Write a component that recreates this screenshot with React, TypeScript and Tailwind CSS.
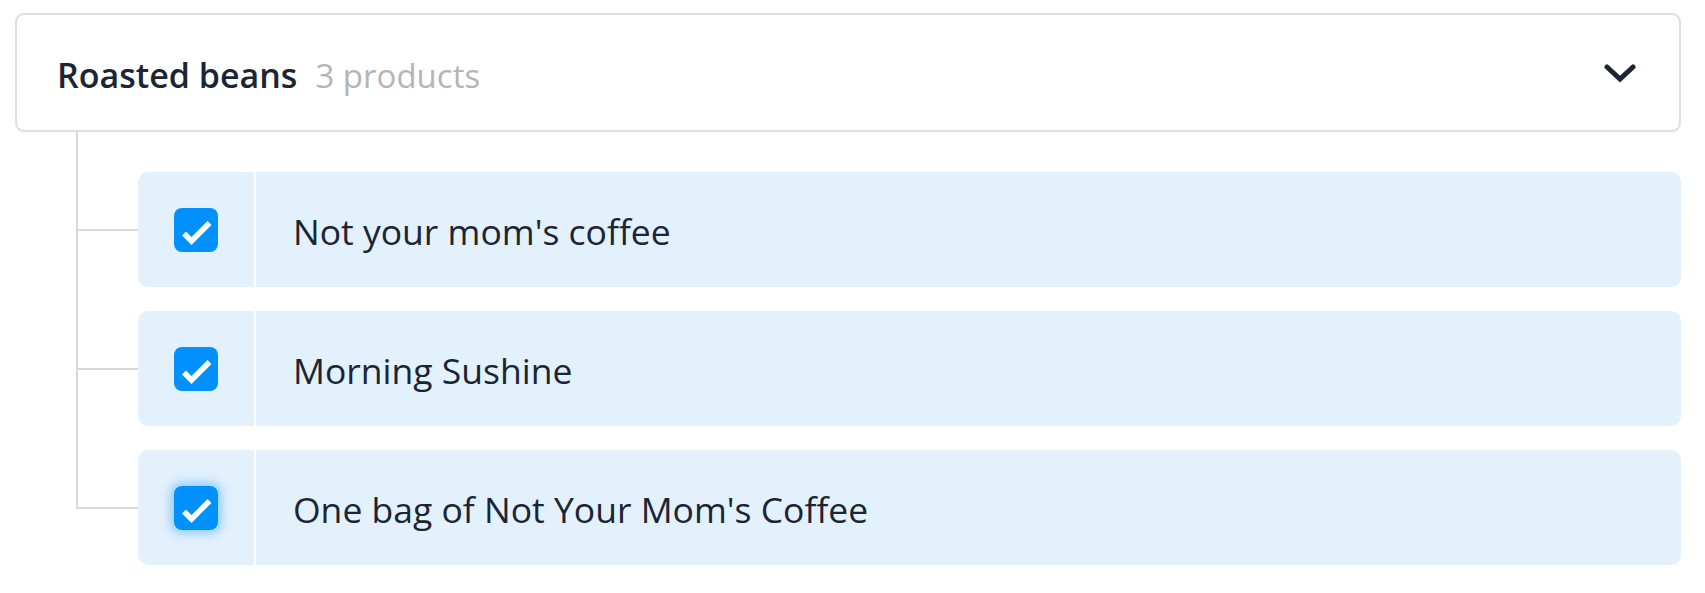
import React from "react";

const items = [
  { name: "Not your mom's coffee", focus: false },
  { name: "Morning Sushine", focus: false },
  { name: "One bag of Not Your Mom's Coffee", focus: true },
];

function Check({ focus }: { focus: boolean }) {
  return (
    <div
      className={
        "w-[44px] h-[44px] rounded-[8px] bg-[#0091ff] flex items-center justify-center " +
        (focus ? "shadow-[0_0_10px_4px_rgba(0,145,255,0.35)]" : "")
      }
    >
      <svg width="44" height="44" viewBox="0 0 44 44">
        <polyline
          points="10,25.5 17.5,33 35.5,15"
          fill="none"
          stroke="#ffffff"
          strokeWidth="5.5"
          strokeLinecap="butt"
          strokeLinejoin="miter"
        />
      </svg>
    </div>
  );
}

export default function App() {
  return (
    <div
      className="bg-white min-h-[593px] pt-[13px] pl-[15px] pr-[24px] text-[#1c2533]"
      style={{ fontFamily: '"Open Sans", "Noto Sans", sans-serif' }}
    >
      <div className="h-[119px] border-2 border-[#dedede] rounded-[9px] flex items-center justify-between pl-[40px] pr-[43px]">
        <div className="flex items-baseline pt-[6px]">
          <span className="text-[34px] font-semibold">Roasted beans</span>
          <span className="text-[33px] text-[#b5b5b5] ml-[18px]">3 products</span>
        </div>
        <svg width="32" height="20" viewBox="0 0 32 20">
          <polyline
            points="3,4 16,16 29,4"
            fill="none"
            stroke="#1c2533"
            strokeWidth="5"
            strokeLinecap="round"
            strokeLinejoin="miter"
          />
        </svg>
      </div>

      <div className="flex flex-col">
        {items.map((it, i) => {
          const last = i === items.length - 1;
          return (
            <div key={i} className="flex">
              <div className="w-[62px] ml-[61px] flex flex-col shrink-0">
                <div
                  className={
                    "border-l-2 border-b-2 border-[#d9d9d9] " +
                    (i === 0 ? "h-[99px]" : "h-[83px]")
                  }
                />
                <div className={"flex-1 " + (last ? "" : "border-l-2 border-[#d9d9d9]")} />
              </div>
              <div className={"flex-1 " + (i === 0 ? "pt-[40px]" : "pt-[24px]")}>
                <div className="h-[115px] bg-[#e3f1fd] rounded-[10px] flex">
                  <div className="w-[118px] border-r-2 border-white flex items-center justify-center shrink-0">
                    <Check focus={it.focus} />
                  </div>
                  <div className="flex items-center pl-[37px] text-[35.5px] pt-[4px]">{it.name}</div>
                </div>
              </div>
            </div>
          );
        })}
      </div>
    </div>
  );
}
